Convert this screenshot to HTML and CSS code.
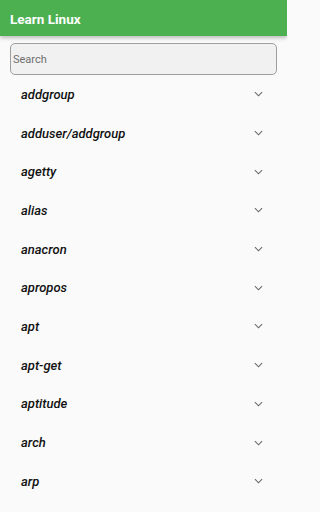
FILE: index.html
```html
<!DOCTYPE html>
<html>
<head>
<meta charset="utf-8">
<link rel="stylesheet" href="styles.css">
</head>
<body>
<div class="screen">
<header class="appbar"><span class="title">Learn Linux</span></header>
<main class="content">
  <div class="search-wrap"><input class="search" type="text" placeholder="Search"></div>
  <ul class="list">
    <li class="row"><span class="cmd">addgroup</span><svg class="chev" viewBox="0 0 10 6"><path d="M1 1l4 4 4-4" /></svg></li>
    <li class="row"><span class="cmd">adduser/addgroup</span><svg class="chev" viewBox="0 0 10 6"><path d="M1 1l4 4 4-4" /></svg></li>
    <li class="row"><span class="cmd">agetty</span><svg class="chev" viewBox="0 0 10 6"><path d="M1 1l4 4 4-4" /></svg></li>
    <li class="row"><span class="cmd">alias</span><svg class="chev" viewBox="0 0 10 6"><path d="M1 1l4 4 4-4" /></svg></li>
    <li class="row"><span class="cmd">anacron</span><svg class="chev" viewBox="0 0 10 6"><path d="M1 1l4 4 4-4" /></svg></li>
    <li class="row"><span class="cmd">apropos</span><svg class="chev" viewBox="0 0 10 6"><path d="M1 1l4 4 4-4" /></svg></li>
    <li class="row"><span class="cmd">apt</span><svg class="chev" viewBox="0 0 10 6"><path d="M1 1l4 4 4-4" /></svg></li>
    <li class="row"><span class="cmd">apt-get</span><svg class="chev" viewBox="0 0 10 6"><path d="M1 1l4 4 4-4" /></svg></li>
    <li class="row"><span class="cmd">aptitude</span><svg class="chev" viewBox="0 0 10 6"><path d="M1 1l4 4 4-4" /></svg></li>
    <li class="row"><span class="cmd">arch</span><svg class="chev" viewBox="0 0 10 6"><path d="M1 1l4 4 4-4" /></svg></li>
    <li class="row"><span class="cmd">arp</span><svg class="chev" viewBox="0 0 10 6"><path d="M1 1l4 4 4-4" /></svg></li>
  </ul>
</main>
</div>
</body>
</html>
```
FILE: styles.css
```css
html, body {
  margin: 0;
  padding: 0;
  background: #fafafa;
  font-family: Roboto, "Liberation Sans", sans-serif;
  overflow: hidden;
}
.screen {
  width: 287px;
  height: 512px;
  overflow: hidden;
  background: #fafafa;
}
.appbar {
  height: 36px;
  background: #4caf50;
  display: flex;
  align-items: center;
  padding-left: 10px;
  box-shadow: 0 2px 4px rgba(0,0,0,0.25);
  position: relative;
  z-index: 1;
}
.title {
  color: #fff;
  font-weight: 700;
  font-size: 13.5px;
  padding-top: 2px;
}
.search-wrap {
  padding: 7px 10px 0 10px;
}
.search {
  box-sizing: border-box;
  width: 100%;
  height: 32px;
  border: 1px solid #9e9e9e;
  border-radius: 5px;
  background: #f1f1f1;
  padding: 0 2px;
  font-family: Roboto, sans-serif;
  font-size: 11px;
  color: #333;
  outline: none;
  display: block;
}
.search::placeholder { color: #6f6f6f; }
.list {
  list-style: none;
  margin: 0;
  padding: 0;
}
.row {
  height: 38.7px;
  display: flex;
  align-items: center;
  justify-content: space-between;
  padding: 0 24px 0 21px;
}
.cmd {
  font-style: italic;
  font-weight: 500;
  font-size: 13px;
  color: #111;
}
.chev {
  width: 9px;
  height: 6px;
  fill: none;
  stroke: #666;
  stroke-width: 1.2;
}
```
